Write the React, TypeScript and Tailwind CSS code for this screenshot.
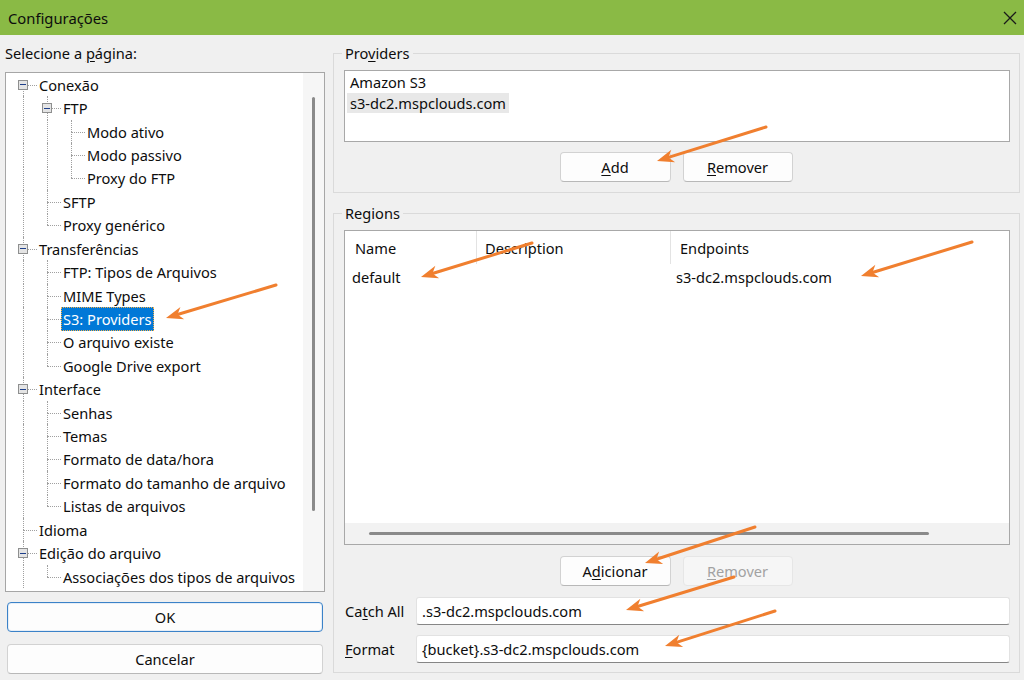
import React from 'react';

type Row = {
  label: string;
  anc: boolean[];
  kids?: boolean;
  next: boolean;
  top?: boolean;
  selected?: boolean;
};

const rows: Row[] = [
  { label: 'Conexão', anc: [], kids: true, next: true, top: false },
  { label: 'FTP', anc: [true], kids: true, next: true },
  { label: 'Modo ativo', anc: [true, true], next: true },
  { label: 'Modo passivo', anc: [true, true], next: true },
  { label: 'Proxy do FTP', anc: [true, true], next: false },
  { label: 'SFTP', anc: [true], next: true },
  { label: 'Proxy genérico', anc: [true], next: false },
  { label: 'Transferências', anc: [], kids: true, next: true },
  { label: 'FTP: Tipos de Arquivos', anc: [true], next: true },
  { label: 'MIME Types', anc: [true], next: true },
  { label: 'S3: Providers', anc: [true], next: true, selected: true },
  { label: 'O arquivo existe', anc: [true], next: true },
  { label: 'Google Drive export', anc: [true], next: false },
  { label: 'Interface', anc: [], kids: true, next: true },
  { label: 'Senhas', anc: [true], next: true },
  { label: 'Temas', anc: [true], next: true },
  { label: 'Formato de data/hora', anc: [true], next: true },
  { label: 'Formato do tamanho de arquivo', anc: [true], next: true },
  { label: 'Listas de arquivos', anc: [true], next: false },
  { label: 'Idioma', anc: [], next: true },
  { label: 'Edição do arquivo', anc: [], kids: true, next: true },
  { label: 'Associações dos tipos de arquivos', anc: [true], next: false },
];

// setas laranja desenhadas por cima do print
const arrows = [
  [276, 285, 166, 318],
  [766, 127, 657, 161],
  [532, 243, 421, 277],
  [972, 242, 861, 276],
  [755, 527, 645, 563],
  [734, 577, 626, 610],
  [775, 611, 665, 646],
];

function Arrow({ x1, y1, x2, y2 }: { x1: number; y1: number; x2: number; y2: number }) {
  const dx = x2 - x1;
  const dy = y2 - y1;
  const len = Math.hypot(dx, dy);
  const ux = dx / len;
  const uy = dy / len;
  const nx = -uy;
  const ny = ux;
  const bx = x2 - ux * 17;
  const by = y2 - uy * 17;
  const kx = x2 - ux * 12;
  const ky = y2 - uy * 12;
  return (
    <g>
      <line x1={x1} y1={y1} x2={kx} y2={ky} stroke="#f07f2f" strokeWidth={3} strokeLinecap="round" />
      <polygon
        points={`${x2},${y2} ${bx + nx * 6.5},${by + ny * 6.5} ${kx},${ky} ${bx - nx * 6.5},${by - ny * 6.5}`}
        fill="#f07f2f"
      />
    </g>
  );
}

function TreeRow({ row }: { row: Row }) {
  const dots = 'border-dotted border-[#a0a0a0]';
  return (
    <div className="flex h-[23.43px] items-center">
      {row.anc.map((on, i) => (
        <div key={i} className="relative w-[24px] self-stretch">
          {on && <span className={`absolute left-[12px] top-0 bottom-0 border-l ${dots}`} />}
        </div>
      ))}
      <div className="relative w-[24px] self-stretch">
        {row.top !== false && <span className={`absolute left-[12px] top-0 h-1/2 border-l ${dots}`} />}
        {row.next && <span className={`absolute left-[12px] top-1/2 bottom-0 border-l ${dots}`} />}
        <span className={`absolute left-[12px] right-[-2px] top-1/2 border-t ${dots}`} />
        {row.kids && (
          <span className="absolute left-[7px] top-1/2 flex h-[10px] w-[10px] -translate-y-1/2 items-center justify-center border border-[#8e8f8f] bg-[#e4e4e4]">
            <span className="h-[1px] w-[6px] bg-[#1e3f8a]" />
          </span>
        )}
      </div>
      {row.selected ? (
        <span className="ml-[2px] flex h-full items-center border border-dotted border-[#f5b04a] bg-[#0078d7] px-[1px] text-white">
          {row.label}
        </span>
      ) : (
        <span className="ml-[4px] whitespace-nowrap">{row.label}</span>
      )}
    </div>
  );
}

function Button({ children, disabled, focused }: { children: React.ReactNode; disabled?: boolean; focused?: boolean }) {
  return (
    <div
      className={
        'flex h-[30px] items-center justify-center rounded-[4px] border ' +
        (disabled
          ? 'border-[#e6e6e6] bg-[#f6f6f6] text-[#a2a2a2]'
          : focused
          ? 'border-[#3b82c8] bg-[#fdfdfd] shadow-[inset_0_0_0_1px_#e6eef7]'
          : 'border-[#d2d2d2] border-b-[#b8b8b8] bg-[#fdfdfd]')
      }
    >
      {children}
    </div>
  );
}

function Field({ label, value }: { label: React.ReactNode; value: string }) {
  return (
    <div className="flex h-[28px] items-center">
      <div className="w-[72px] pl-[1px]">{label}</div>
      <div className="flex h-full flex-1 items-center rounded-[3px] border border-[#e2e2e2] border-b-[#868686] bg-white pl-[5px]">
        {value}
      </div>
    </div>
  );
}

export default function App() {
  return (
    <div className="relative h-[680px] w-[1024px] overflow-hidden bg-[#f0f0f0] font-['Noto_Sans',sans-serif] text-[14.6px] leading-[20px] text-[#0d0d0d]">
      {/* Title bar */}
      <div className="flex h-[35px] items-center justify-between bg-[#8aba45] pl-[8px] pr-[7px]">
        <span className="text-[14.8px]">Configurações</span>
        <svg width="14" height="14" viewBox="0 0 14 14">
          <path d="M1 1 L13 13 M13 1 L1 13" stroke="#1a1a1a" strokeWidth="1.3" />
        </svg>
      </div>

      <div className="flex">
        {/* Left column */}
        <div className="ml-[5px] w-[320px]">
          <div className="flex h-[37px] items-center pb-[2px]">
            <span>
              Selecione a <u className="underline-offset-2">p</u>ágina:
            </span>
          </div>
          <div className="flex h-[520px] border border-[#a6a6a6] bg-white">
            <div className="flex-1 overflow-hidden pl-[5px]">
              {rows.map((r) => (
                <TreeRow key={r.label} row={r} />
              ))}
            </div>
            <div className="flex w-[21px] justify-center bg-[#f6f6f6] pt-[24px]">
              <div className="h-[414px] w-[3px] rounded-full bg-[#8a8a8a]" />
            </div>
          </div>
          <div className="mx-[2px] mt-[10px]">
            <Button focused>OK</Button>
          </div>
          <div className="mx-[2px] mt-[12px]">
            <Button>Cancelar</Button>
          </div>
        </div>

        {/* Right column */}
        <div className="ml-[8px] w-[687px] pt-[8px]">
          <fieldset className="border border-[#dadada] px-[9px] pb-[10px] pl-[10px] pt-[7px]">
            <legend className="-ml-[2px] px-[3px]">
              Pro<u className="underline-offset-2">v</u>iders
            </legend>
            <div className="h-[72px] border border-[#a8a8a8] bg-white pl-[2px]">
              <div className="flex h-[22px] w-fit items-center px-[3px]">Amazon S3</div>
              <div className="flex h-[20px] w-fit items-center bg-[#e8e8e8] px-[3px]">s3-dc2.mspclouds.com</div>
            </div>
            <div className="mt-[10px] flex justify-center gap-[12px] pr-[2px]">
              <div className="w-[111px]">
                <Button>
                  <span>
                    <u className="underline-offset-2">A</u>dd
                  </span>
                </Button>
              </div>
              <div className="w-[110px]">
                <Button>
                  <span>
                    <u className="underline-offset-2">R</u>emover
                  </span>
                </Button>
              </div>
            </div>
          </fieldset>

          <fieldset className="mt-[10px] border border-[#dadada] pb-[9px] pl-[10px] pr-[9px] pt-[7px]">
            <legend className="-ml-[2px] px-[3px]">Regions</legend>
            <div className="flex h-[315px] flex-col border border-[#a8a8a8] bg-white">
              <div className="flex h-[33px]">
                <div className="flex w-[132px] items-center border-r border-[#e3e3e3] pl-[10px]">Name</div>
                <div className="flex w-[194px] items-center border-r border-[#e3e3e3] pl-[8px]">Description</div>
                <div className="flex flex-1 items-center pl-[9px]">Endpoints</div>
              </div>
              <div className="flex h-[26px] items-center">
                <div className="w-[132px] pl-[7px]">default</div>
                <div className="w-[194px]" />
                <div className="flex-1 pl-[5px]">s3-dc2.mspclouds.com</div>
              </div>
              <div className="flex-1" />
              <div className="flex h-[21px] items-center bg-[#f2f2f2] pl-[24px]">
                <div className="h-[3px] w-[560px] rounded-full bg-[#8a8a8a]" />
              </div>
            </div>
            <div className="mt-[11px] flex justify-center gap-[12px] pr-[2px]">
              <div className="w-[111px]">
                <Button>
                  <span>
                    A<u className="underline-offset-2">d</u>icionar
                  </span>
                </Button>
              </div>
              <div className="w-[110px]">
                <Button disabled>
                  <span>
                    <u className="underline-offset-2">R</u>emover
                  </span>
                </Button>
              </div>
            </div>
            <div className="mt-[11px]">
              <Field
                label={
                  <span>
                    Ca<u className="underline-offset-2">t</u>ch All
                  </span>
                }
                value=".s3-dc2.mspclouds.com"
              />
            </div>
            <div className="mt-[10px]">
              <Field
                label={
                  <span>
                    <u className="underline-offset-2">F</u>ormat
                  </span>
                }
                value="{bucket}.s3-dc2.mspclouds.com"
              />
            </div>
          </fieldset>
        </div>
      </div>

      <svg className="pointer-events-none absolute left-0 top-0" width="1024" height="680">
        {arrows.map(([x1, y1, x2, y2], i) => (
          <Arrow key={i} x1={x1} y1={y1} x2={x2} y2={y2} />
        ))}
      </svg>
    </div>
  );
}
